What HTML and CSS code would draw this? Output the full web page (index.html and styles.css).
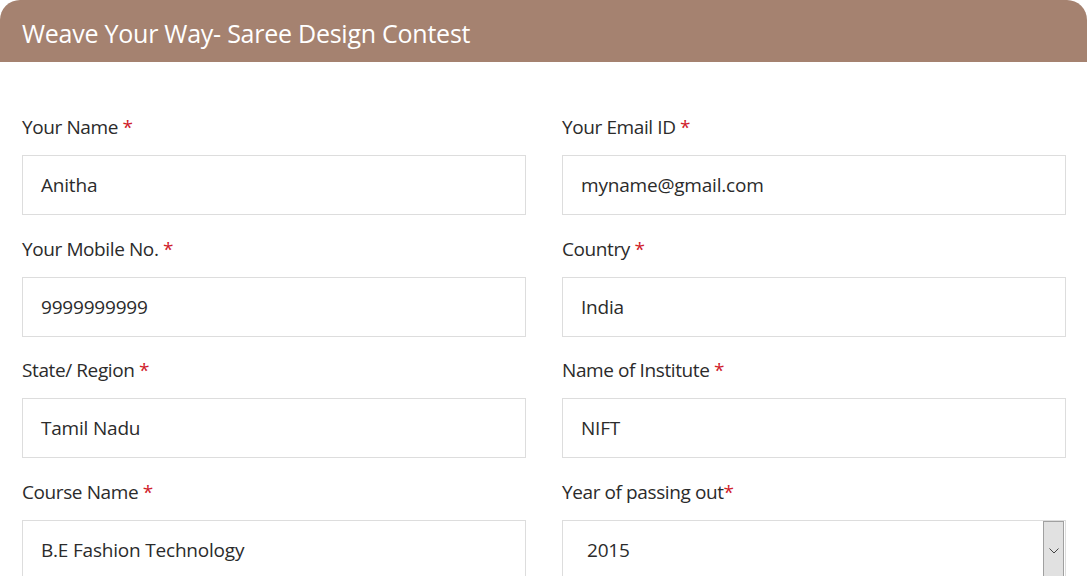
FILE: index.html
```html
<!DOCTYPE html>
<html>
<head>
<meta charset="utf-8">
<link rel="stylesheet" href="styles.css">
</head>
<body>
<div class="card">
  <div class="card-header">Weave Your Way- Saree Design Contest</div>
  <form class="form-grid">
    <div class="field">
      <label class="label">Your Name <span class="req">*</span></label>
      <div class="input">Anitha</div>
    </div>
    <div class="field">
      <label class="label">Your Email ID <span class="req">*</span></label>
      <div class="input">myname@gmail.com</div>
    </div>
    <div class="field">
      <label class="label">Your Mobile No. <span class="req">*</span></label>
      <div class="input">9999999999</div>
    </div>
    <div class="field">
      <label class="label">Country <span class="req">*</span></label>
      <div class="input">India</div>
    </div>
    <div class="field">
      <label class="label">State/ Region <span class="req">*</span></label>
      <div class="input">Tamil Nadu</div>
    </div>
    <div class="field">
      <label class="label">Name of Institute <span class="req">*</span></label>
      <div class="input">NIFT</div>
    </div>
    <div class="field">
      <label class="label">Course Name <span class="req">*</span></label>
      <div class="input">B.E Fashion Technology</div>
    </div>
    <div class="field">
      <label class="label">Year of passing out<span class="req">*</span></label>
      <div class="input select">
        <span class="select-value">2015</span>
        <span class="select-btn">
          <svg width="10" height="6" viewBox="0 0 10 6"><path d="M0.5 0.5 L5 5 L9.5 0.5" fill="none" stroke="#444" stroke-width="1"/></svg>
        </span>
      </div>
    </div>
  </form>
</div>
</body>
</html>
```
FILE: styles.css
```css
html, body {
  margin: 0;
  padding: 0;
  background: #fff;
  overflow: hidden;
}
body {
  font-family: "Open Sans", "Noto Sans", sans-serif;
  color: #2b2b2b;
}
.card {
  width: 1087px;
}
.card-header {
  background: #a58270;
  color: #fff;
  height: 62px;
  border-radius: 20px 20px 0 0;
  box-sizing: border-box;
  padding: 0 22px;
  font-size: 25px;
  line-height: 66px;
  letter-spacing: -0.25px;
}
.form-grid {
  display: grid;
  grid-template-columns: 504px 504px;
  column-gap: 36px;
  row-gap: 18.67px;
  padding: 50px 21px 0 22px;
}
.field {
  display: flex;
  flex-direction: column;
}
.label {
  font-size: 19px;
  line-height: 30px;
  margin-bottom: 13px;
  color: #2b2b2b;
  letter-spacing: -0.4px;
}
.req {
  color: #d0202a;
}
.input {
  height: 60px;
  box-sizing: border-box;
  border: 1px solid #ddd;
  padding: 0 18px;
  font-size: 19px;
  line-height: 58px;
  color: #2b2b2b;
  letter-spacing: -0.2px;
}
.select {
  display: flex;
  justify-content: space-between;
  padding: 0 1px 0 24px;
}
.select-btn {
  width: 19px;
  height: 100%;
  background: #e1e1e1;
  border: 1px solid #a0a0a0;
  display: flex;
  align-items: center;
  justify-content: center;
}
```
